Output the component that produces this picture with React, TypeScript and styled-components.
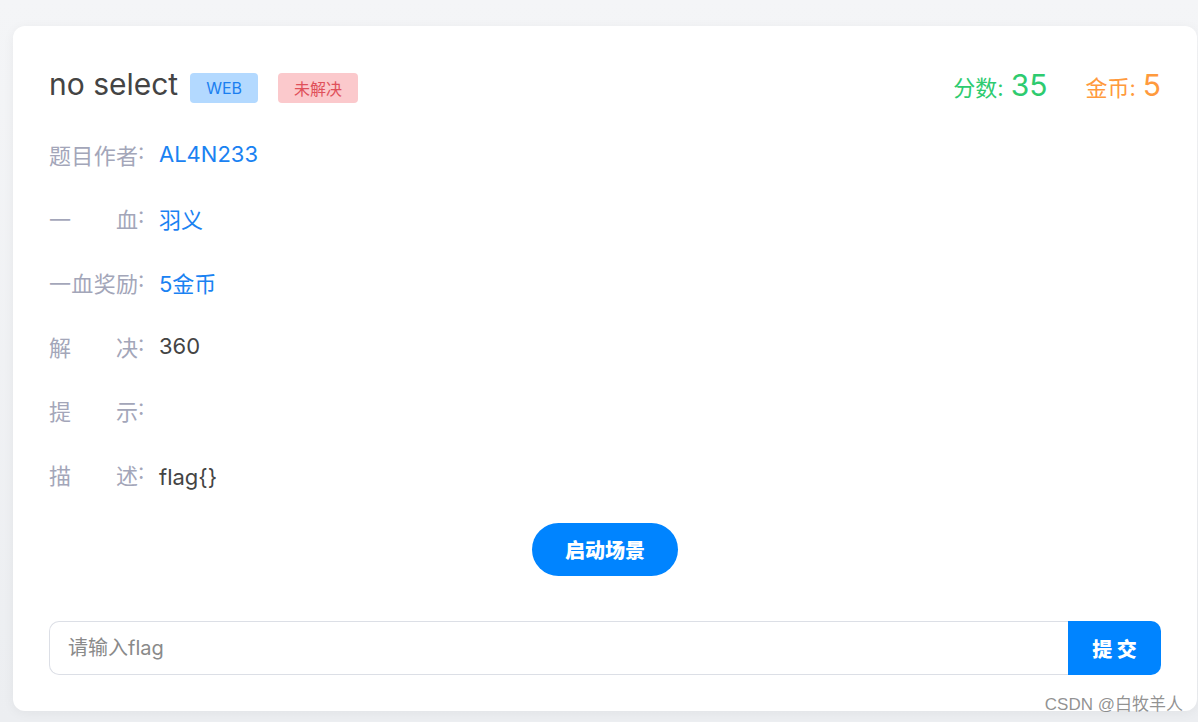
import React, { useState } from "react";
import styled, { createGlobalStyle } from "styled-components";

const GlobalStyle = createGlobalStyle`
  html, body {
    margin: 0;
    padding: 0;
    background: linear-gradient(180deg, #f4f5f7 0%, #eceef1 100%);
    font-family: Inter, "Noto Sans CJK SC", sans-serif;
  }
  #root {
    min-height: 722px;
  }
`;

const Page = styled.div`
  position: relative;
  padding: 26px 1px 11px 13px;
  min-height: 722px;
  box-sizing: border-box;
`;

const Card = styled.div`
  background: #fff;
  border-radius: 12px;
  box-shadow: 0 2px 12px rgba(0, 0, 0, 0.05);
  padding: 38px 36px 36px;
`;

const Header = styled.div`
  display: flex;
  align-items: center;
  height: 40px;
`;

const Title = styled.h2`
  margin: 0 12px 0 0;
  font-size: 30px;
  font-weight: 400;
  color: #444;
  line-height: 36px;
`;

const Tag = styled.span<{ $tone: "blue" | "red" }>`
  display: inline-flex;
  align-items: center;
  justify-content: center;
  height: 30px;
  padding: 0 16px;
  margin-top: 8px;
  margin-right: 20px;
  border-radius: 4px;
  font-size: 16px;
  background: ${(p) => (p.$tone === "blue" ? "#b3d9ff" : "#fbc9cc")};
  color: ${(p) => (p.$tone === "blue" ? "#1a7ff0" : "#e0505a")};
`;

const Stats = styled.div`
  margin-left: auto;
  display: flex;
  align-items: baseline;
  gap: 38px;
  margin-top: 2px;
`;

const Stat = styled.span<{ $color: string }>`
  color: ${(p) => p.$color};
  font-size: 22px;
  b {
    font-weight: 400;
    font-size: 30px;
    margin-left: 7px;
  }
`;

const InfoList = styled.div`
  margin-top: 18px;
  display: flex;
  flex-direction: column;
`;

const Row = styled.div`
  display: flex;
  align-items: center;
  height: 64px;
  font-size: 22px;
`;

const Label = styled.span`
  display: flex;
  width: 110px;
  flex-shrink: 0;
  color: #a3a6b9;
`;

const LabelText = styled.span`
  width: 89px;
  text-align: justify;
  text-align-last: justify;
`;

const Value = styled.span<{ $blue?: boolean }>`
  color: ${(p) => (p.$blue ? "#1a82f2" : "#444")};
`;

const Desc = styled.span`
  color: #444;
  padding-top: 5px;
`;

const Center = styled.div`
  display: flex;
  justify-content: center;
  margin-top: 17px;
`;

const LaunchButton = styled.button`
  height: 53px;
  width: 146px;
  border: none;
  border-radius: 27px;
  background: #0084ff;
  color: #fff;
  font-size: 20px;
  font-weight: 800;
  font-family: Inter, "Noto Sans CJK SC", sans-serif;
  cursor: pointer;
`;

const FlagForm = styled.form`
  display: flex;
  margin-top: 45px;
  height: 54px;
`;

const FlagInput = styled.input`
  flex: 1;
  border: 1px solid #dcdfe6;
  border-right: none;
  border-radius: 10px 0 0 10px;
  padding: 0 18px;
  font-size: 20px;
  font-family: Inter, "Noto Sans CJK SC", sans-serif;
  color: #444;
  outline: none;
  &::placeholder {
    color: #8a8a8a;
  }
`;

const SubmitButton = styled.button`
  width: 93px;
  border: none;
  border-radius: 0 10px 10px 0;
  background: #0084ff;
  color: #fff;
  font-size: 20px;
  font-weight: 800;
  font-family: Inter, "Noto Sans CJK SC", sans-serif;
  cursor: pointer;
`;

const Watermark = styled.div`
  position: absolute;
  right: 15px;
  bottom: 7px;
  font-size: 17px;
  color: rgba(110, 110, 110, 0.75);
  font-family: "Liberation Sans", "Noto Sans CJK SC", sans-serif;
`;

const rows: { label: string; value?: string; blue?: boolean }[] = [
  { label: "题目作者", value: "AL4N233", blue: true },
  { label: "一血", value: "羽义", blue: true },
  { label: "一血奖励", value: "5金币", blue: true },
  { label: "解决", value: "360" },
  { label: "提示" },
];

export default function App() {
  const [flag, setFlag] = useState("");
  return (
    <Page>
      <GlobalStyle />
      <Card>
        <Header>
          <Title>no select</Title>
          <Tag $tone="blue">WEB</Tag>
          <Tag $tone="red">未解决</Tag>
          <Stats>
            <Stat $color="#2ecb6f">
              分数:<b>35</b>
            </Stat>
            <Stat $color="#ff9a3d">
              金币:<b>5</b>
            </Stat>
          </Stats>
        </Header>
        <InfoList>
          {rows.map((r) => (
            <Row key={r.label}>
              <Label>
                <LabelText>{r.label}</LabelText>:
              </Label>
              {r.value && <Value $blue={r.blue}>{r.value}</Value>}
            </Row>
          ))}
          <Row>
            <Label>
              <LabelText>描述</LabelText>:
            </Label>
            <Desc>flag{"{}"}</Desc>
          </Row>
        </InfoList>
        <Center>
          <LaunchButton type="button">启动场景</LaunchButton>
        </Center>
        <FlagForm onSubmit={(e) => e.preventDefault()}>
          <FlagInput
            placeholder="请输入flag"
            value={flag}
            onChange={(e) => setFlag(e.target.value)}
          />
          <SubmitButton type="submit">提 交</SubmitButton>
        </FlagForm>
      </Card>
      <Watermark>CSDN @白牧羊人</Watermark>
    </Page>
  );
}
